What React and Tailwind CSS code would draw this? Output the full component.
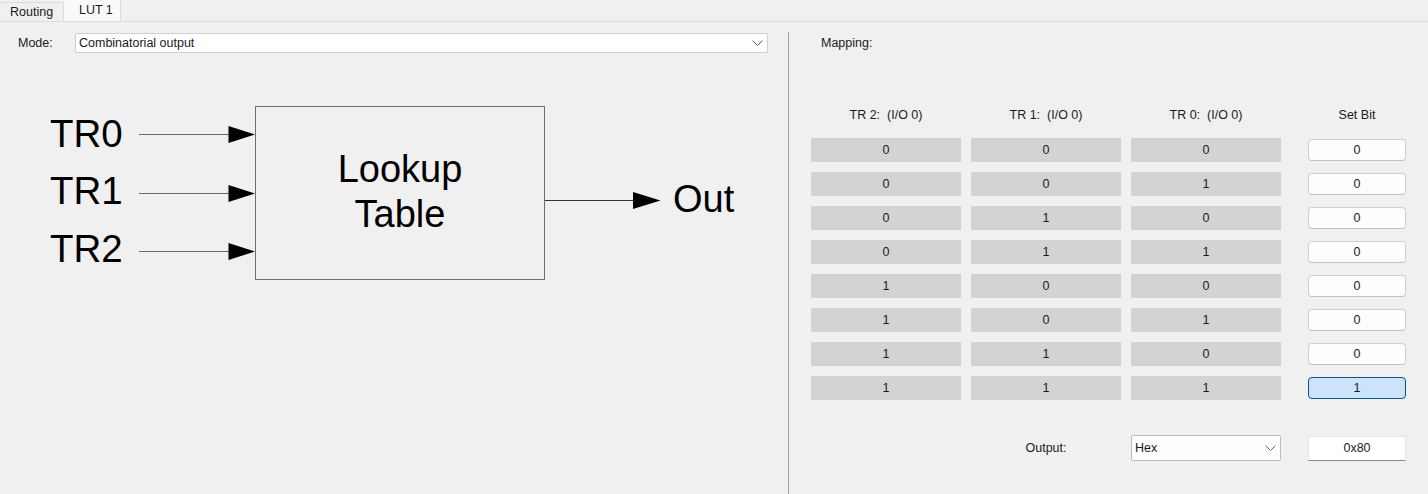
import React from "react";

function Chevron({ className = "" }) {
  return (
    <svg width="11" height="6" viewBox="0 0 11 6" className={className}>
      <polyline points="0.5,0.5 5.5,5.5 10.5,0.5" fill="none" stroke="#606060" strokeWidth="1" />
    </svg>
  );
}

function Diagram() {
  const ins = [
    { label: "TR0", y: 44, base: 56.7 },
    { label: "TR1", y: 103, base: 113.5 },
    { label: "TR2", y: 161, base: 171.7 },
  ];
  return (
    <svg width="788" height="200" viewBox="0 0 788 200" className="block">
      <g fontFamily="'Liberation Sans', Arial, sans-serif" fill="#000">
        {ins.map((r) => (
          <g key={r.label}>
            <text x="50" y={r.base} fontSize="38.5">{r.label}</text>
            <line x1="139" y1={r.y + 0.5} x2="232" y2={r.y + 0.5} stroke="#6a6a6a" strokeWidth="1.2" />
            <polygon points={`228.5,${r.y - 8} 255,${r.y + 0.5} 228.5,${r.y + 9}`} fill="#000" />
          </g>
        ))}
        <rect x="255.5" y="16.5" width="289" height="173" fill="none" stroke="#6e6e6e" strokeWidth="1" />
        <text x="400" y="92" fontSize="38" textAnchor="middle">Lookup</text>
        <text x="400" y="137" fontSize="38" textAnchor="middle">Table</text>
        <line x1="545" y1="110.5" x2="636" y2="110.5" stroke="#333" strokeWidth="1" />
        <polygon points="633,102 660.5,110.5 633,119" fill="#000" />
        <text x="673" y="122" fontSize="38">Out</text>
      </g>
    </svg>
  );
}

export default function App() {
  const rows = [
    [0, 0, 0, 0],
    [0, 0, 1, 0],
    [0, 1, 0, 0],
    [0, 1, 1, 0],
    [1, 0, 0, 0],
    [1, 0, 1, 0],
    [1, 1, 0, 0],
    [1, 1, 1, 1],
  ];
  return (
    <div className="w-[1428px] h-[494px] bg-[#f0f0f0] flex flex-col overflow-hidden text-[12.5px] text-[#1a1a1a] font-['Liberation_Sans',Arial,sans-serif]">
      {/* Tabs */}
      <div className="h-[22px] flex border-b border-[#dcdcdc] shrink-0">
        <div className="w-[64px] mt-[2px] border-t border-r border-[#dcdcdc] flex items-center pl-[10px] leading-none">
          Routing
        </div>
        <div className="w-[57px] bg-[#fafafa] border-r border-[#dcdcdc] flex items-center pl-[15px] leading-none">
          LUT 1
        </div>
      </div>

      <div className="flex flex-1 min-h-0">
        {/* Left panel */}
        <div className="w-[788px] flex flex-col shrink-0">
          <div className="flex items-center mt-[11px] h-[20px]">
            <div className="w-[75px] pl-[18px]">Mode:</div>
            <div className="w-[693px] h-[20px] bg-white border border-[#cfcfcf] rounded-[2px] flex items-center justify-between pl-[3px] pr-[4px]">
              <span>Combinatorial output</span>
              <Chevron />
            </div>
          </div>
          <div className="mt-[37px]">
            <Diagram />
          </div>
        </div>

        {/* Divider */}
        <div className="w-px bg-[#a0a0a0] mt-[10px] shrink-0" />

        {/* Right panel */}
        <div className="flex-1 flex flex-col pl-[22px]">
          <div className="mt-[13px] h-[16px] leading-[16px] pl-[10px]">Mapping:</div>

          <div className="flex mt-[56px] h-[16px] leading-[16px] whitespace-pre">
            <div className="w-[150px] text-center">TR 2:  (I/O 0)</div>
            <div className="w-[150px] ml-[10px] text-center">TR 1:  (I/O 0)</div>
            <div className="w-[150px] ml-[10px] text-center">TR 0:  (I/O 0)</div>
            <div className="w-[98px] ml-[27px] text-center">Set Bit</div>
          </div>

          <div className="flex flex-col gap-[10px] mt-[15px]">
            {rows.map((r, i) => (
              <div key={i} className="flex items-center h-[24px]">
                <div className="w-[150px] h-[24px] bg-[#d3d3d3] flex items-center justify-center">{r[0]}</div>
                <div className="w-[150px] h-[24px] ml-[10px] bg-[#d3d3d3] flex items-center justify-center">{r[1]}</div>
                <div className="w-[150px] h-[24px] ml-[10px] bg-[#d3d3d3] flex items-center justify-center">{r[2]}</div>
                {r[3] ? (
                  <div className="w-[98px] h-[22px] ml-[27px] bg-[#cce4f7] border border-[#005499] rounded-[4px] flex items-center justify-center">
                    {r[3]}
                  </div>
                ) : (
                  <div className="w-[98px] h-[22px] ml-[27px] bg-[#fdfdfd] border border-[#d0d0d0] border-b-[#c0c0c0] rounded-[4px] flex items-center justify-center">
                    {r[3]}
                  </div>
                )}
              </div>
            ))}
          </div>

          <div className="flex items-center mt-[35px] h-[26px]">
            <div className="w-[150px]" />
            <div className="w-[150px] ml-[10px] text-center">Output:</div>
            <div className="w-[150px] h-[26px] ml-[10px] bg-[#fdfdfd] border border-[#bcbcbc] rounded-[2px] flex items-center justify-between pl-[3px] pr-[4px]">
              <span>Hex</span>
              <Chevron />
            </div>
            <div className="w-[98px] h-[25px] ml-[27px] bg-white border border-[#e5e5e5] border-b-[#868686] flex items-center justify-center">
              0x80
            </div>
          </div>
        </div>
      </div>
    </div>
  );
}
